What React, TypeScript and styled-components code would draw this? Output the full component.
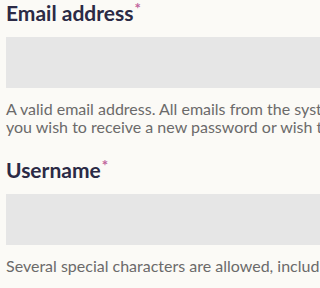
import React, { FC } from "react";
import styled, { createGlobalStyle } from "styled-components";

const GlobalStyle = createGlobalStyle`
  html, body {
    margin: 0;
    padding: 0;
    background: #fbfaf6;
    overflow: hidden;
  }
  body {
    font-family: Lato, "Noto Sans", sans-serif;
  }
`;

interface FieldProps {
  label: string;
  help: string[];
  type?: string;
}

const Field: FC<FieldProps> = ({ label, help, type = "text" }) => (
  <FieldWrap>
    <Label>
      {label}
      <Required>*</Required>
    </Label>
    <Input type={type} />
    <Help>
      {help.map((line) => (
        <HelpLine key={line}>{line}</HelpLine>
      ))}
    </Help>
  </FieldWrap>
);

export default function App() {
  return (
    <>
      <GlobalStyle />
      <Viewport>
        <Form>
          <Field
            label="Email address"
            type="email"
            help={[
              "A valid email address. All emails from the system will be sent to this address. The email address is not made public and will only be used if",
              "you wish to receive a new password or wish to receive certain news or notifications by email.",
            ]}
          />
          <Field
            label="Username"
            help={[
              "Several special characters are allowed, including space, period (.), hyphen (-), apostrophe ('), underscore (_), and the @ sign.",
            ]}
          />
        </Form>
      </Viewport>
    </>
  );
}

const Viewport = styled.div`
  width: 100vw;
  height: 100vh;
  overflow: hidden;
`;

const Form = styled.form`
  display: flex;
  flex-direction: column;
  gap: 21px;
  padding: 0 0 0 6px;
  width: 1000px;
`;

const FieldWrap = styled.div`
  display: flex;
  flex-direction: column;
`;

const Label = styled.label`
  display: block;
  color: #2b2a45;
  font-size: 21px;
  font-weight: 700;
  line-height: 26px;
  margin: 0 0 11px;
`;

const Required = styled.span`
  color: #c0649c;
  font-size: 15px;
  vertical-align: top;
  line-height: 16px;
  margin-left: 1px;
`;

const Input = styled.input`
  box-sizing: border-box;
  width: 100%;
  height: 51px;
  border: 0;
  border-radius: 0;
  background: #e6e6e6;
  margin: 0;
`;

const Help = styled.p`
  color: #6b6a6a;
  font-size: 16px;
  line-height: 18px;
  margin: 12px 0 0;
`;

const HelpLine = styled.span`
  display: block;
  white-space: nowrap;
`;
